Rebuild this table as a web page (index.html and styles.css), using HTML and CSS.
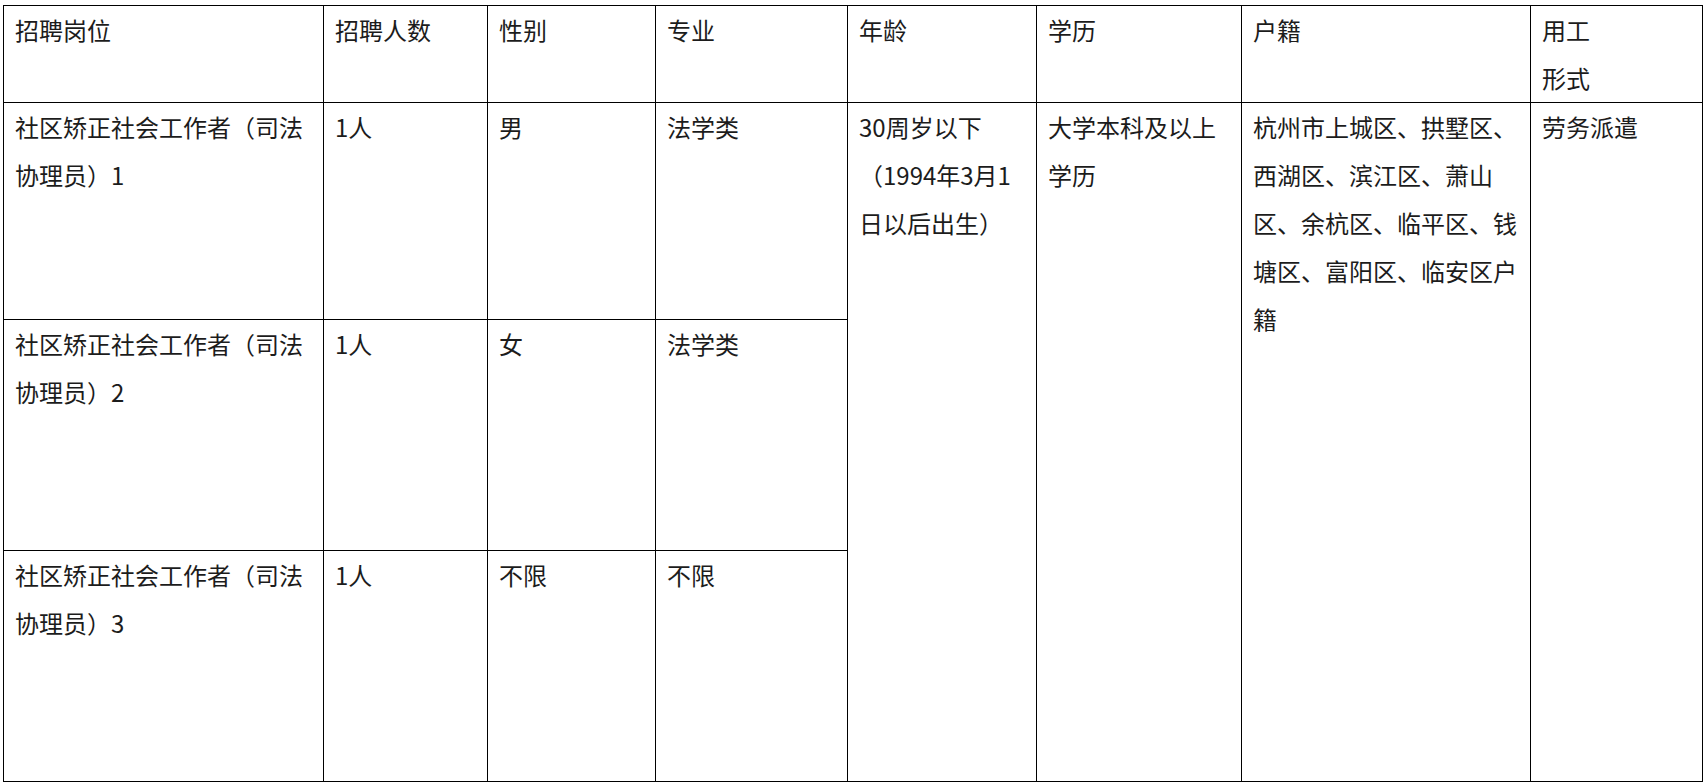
FILE: index.html
```html
<!DOCTYPE html>
<html lang="zh-CN">
<head>
<meta charset="utf-8">
<title>招聘岗位</title>
<link rel="stylesheet" href="styles.css">
</head>
<body>
<div class="page">
<table class="jobs">
  <colgroup>
    <col class="c-post">
    <col class="c-num">
    <col class="c-sex">
    <col class="c-major">
    <col class="c-age">
    <col class="c-edu">
    <col class="c-hukou">
    <col class="c-type">
  </colgroup>
  <tr class="r-head">
    <td>招聘岗位</td>
    <td>招聘人数</td>
    <td>性别</td>
    <td>专业</td>
    <td>年龄</td>
    <td>学历</td>
    <td>户籍</td>
    <td>用工<br>形式</td>
  </tr>
  <tr class="r-1">
    <td>社区矫正社会工作者（司法协理员）1</td>
    <td>1人</td>
    <td>男</td>
    <td>法学类</td>
    <td rowspan="3">30周岁以下<br>（1994年3月1日以后出生）</td>
    <td rowspan="3">大学本科及以上学历</td>
    <td rowspan="3">杭州市上城区、拱墅区、西湖区、滨江区、萧山区、余杭区、临平区、钱塘区、富阳区、临安区户籍</td>
    <td rowspan="3">劳务派遣</td>
  </tr>
  <tr class="r-2">
    <td>社区矫正社会工作者（司法协理员）2</td>
    <td>1人</td>
    <td>女</td>
    <td>法学类</td>
  </tr>
  <tr class="r-3">
    <td>社区矫正社会工作者（司法协理员）3</td>
    <td>1人</td>
    <td>不限</td>
    <td>不限</td>
  </tr>
</table>
</div>
</body>
</html>
```

FILE: styles.css
```css
html, body {
  margin: 0;
  padding: 0;
  background: #ffffff;
}

.page {
  padding: 5px 0 0 3px;
}

.jobs {
  border-collapse: collapse;
  table-layout: fixed;
  width: 1700px;
  font-family: "Noto Sans CJK SC", "Noto Sans", sans-serif;
  font-size: 24px;
  line-height: 48px;
  color: #1c1c1c;
}

.c-post { width: 320px; }
.c-num { width: 164px; }
.c-sex { width: 168px; }
.c-major { width: 192px; }
.c-age { width: 189px; }
.c-edu { width: 205px; }
.c-hukou { width: 289px; }
.c-type { width: 172px; }

.jobs td {
  border: 1px solid #000;
  padding: 0 11px;
  vertical-align: top;
  text-align: left;
}

.r-head { height: 95px; }
.r-1 { height: 217px; }
.r-2 { height: 231px; }
.r-3 { height: 231px; }
```
